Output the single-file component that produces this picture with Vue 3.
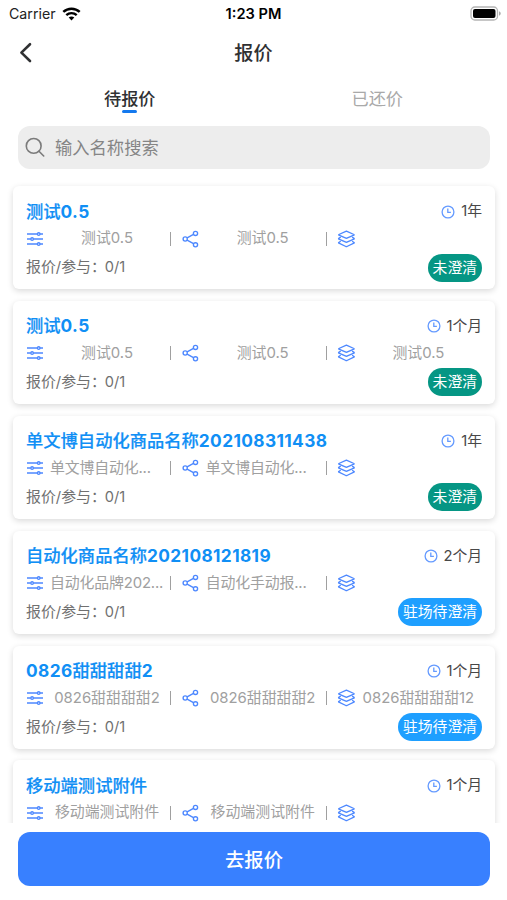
<script setup>
const cards = [
  { title: [['测试', 0], ['0.5', 1]], term: '1年', meta: ['测试0.5', '测试0.5', ''], status: '未澄清', tone: 'green' },
  { title: [['测试', 0], ['0.5', 1]], term: '1个月', meta: ['测试0.5', '测试0.5', '测试0.5'], status: '未澄清', tone: 'green' },
  { title: [['单文博自动化商品名称', 0], ['202108311438', 1]], term: '1年', meta: ['单文博自动化...', '单文博自动化...', ''], status: '未澄清', tone: 'green' },
  { title: [['自动化商品名称', 0], ['202108121819', 1]], term: '2个月', meta: ['自动化品牌202...', '自动化手动报...', ''], status: '驻场待澄清', tone: 'blue' },
  { title: [['0826', 1], ['甜甜甜甜', 0], ['2', 1]], term: '1个月', meta: ['0826甜甜甜甜2', '0826甜甜甜甜2', '0826甜甜甜甜12'], status: '驻场待澄清', tone: 'blue' },
  { title: [['移动端测试附件', 0]], term: '1个月', meta: ['移动端测试附件', '移动端测试附件', ''] },
]
</script>

<template>
  <div class="screen">
    <header class="status-bar">
      <div class="carrier">
        <span>Carrier</span>
        <svg width="19" height="14" viewBox="0 0 19 14" fill="none" stroke="#000">
          <path d="M1.3 4.9C5.9.6 13.1.6 17.7 4.9" stroke-width="2.5" />
          <path d="M4.3 8.1c2.9-2.7 7.5-2.7 10.4 0" stroke-width="2.4" />
          <path d="M6.7 10.5c1.6-1.4 4-1.4 5.6 0L9.5 13.5z" fill="#000" stroke="none" />
        </svg>
      </div>
      <div class="time">1:23 PM</div>
      <div class="battery">
        <svg width="32" height="16" viewBox="0 0 32 16">
          <rect x="1" y="1" width="26.5" height="13" rx="3.8" fill="#fff" stroke="#b4b4b4" stroke-width="1.3" />
          <rect x="3" y="3" width="22.5" height="9" rx="2" fill="#000" />
          <path d="M29 5.3c2.3.8 2.3 3.6 0 4.4z" fill="#aaa" />
        </svg>
      </div>
    </header>

    <nav class="nav-bar">
      <svg class="back" width="16" height="22" viewBox="0 0 16 22" fill="none" stroke="#303133" stroke-width="2.6" stroke-linecap="round" stroke-linejoin="round">
        <path d="M12 2.2 3.4 10.6 12 19" />
      </svg>
      <h1>报价</h1>
    </nav>

    <div class="tabs">
      <div class="tab active"><span>待报价</span><i></i></div>
      <div class="tab"><span>已还价</span></div>
    </div>

    <div class="search">
      <svg width="20" height="20" viewBox="0 0 20 20" fill="none" stroke="#7b7b7b" stroke-width="1.6" stroke-linecap="round">
        <circle cx="8.7" cy="8.9" r="7.4" />
        <path d="m14 14.3 4.7 4.7" />
      </svg>
      <span>输入名称搜索</span>
    </div>

    <main class="list">
      <article v-for="(card, i) in cards" :key="i" class="card">
        <div class="card-head">
          <h2><span v-for="(part, p) in card.title" :key="p" :class="{ digits: part[1] }">{{ part[0] }}</span></h2>
          <div class="term">
            <svg width="14" height="14" viewBox="0 0 14 14" fill="none" stroke="#649aff" stroke-width="1.3">
              <circle cx="7" cy="7" r="5.9" />
              <path d="M6.8 3.4v3.9h3.1" />
            </svg>
            <span>{{ card.term }}</span>
          </div>
        </div>
        <div class="meta">
          <div v-for="(text, n) in card.meta" :key="n" class="cell">
            <svg width="18" height="18" viewBox="0 0 18 18" fill="none" stroke="#4d88ff" stroke-width="1.35" stroke-linejoin="round">
              <template v-if="n === 0">
                <path d="M1 4h10.3M14 4h3M1 9h3.8M7.4 9H17M1 14h10.3M14 14h3" />
                <circle cx="12.7" cy="4" r="1.3" />
                <circle cx="6.1" cy="9" r="1.3" />
                <circle cx="12.7" cy="14" r="1.3" />
              </template>
              <template v-else-if="n === 1">
                <circle cx="3.2" cy="9" r="2.1" />
                <circle cx="13.5" cy="3.4" r="2.1" />
                <circle cx="13.5" cy="14.8" r="2.1" />
                <path d="m5.1 7.9 6.4-3.5M5.1 10.1l6.4 3.6" />
              </template>
              <template v-else>
                <path d="M9.4 1.2 16.9 4.5Q17.3 4.8 16.9 5.1L9.9 8.1Q9.4 8.3 8.9 8.1L1.9 5.1Q1.5 4.8 1.9 4.5z" />
                <path d="M3.7 7.2 1.7 8.4Q1.4 8.8 1.9 9.1L8.9 12.1Q9.4 12.3 9.9 12.1L16.9 9.1Q17.4 8.8 17.1 8.4L15.1 7.2" />
                <path d="M3.7 11.2 1.7 12.5Q1.4 12.9 1.9 13.2L8.9 16.5Q9.4 16.7 9.9 16.5L16.9 13.2Q17.4 12.9 17.1 12.5L15.1 11.2" />
              </template>
            </svg>
            <span class="value" :class="{ clipped: text.endsWith('...') }">{{ text }}</span>
            <span v-if="n < 2" class="divider"></span>
          </div>
        </div>
        <div v-if="card.status" class="card-foot">
          <span class="count">报价/参与：<em>0/1</em></span>
          <span class="badge" :class="card.tone">{{ card.status }}</span>
        </div>
      </article>
    </main>

    <footer class="bottom">
      <button type="button">去报价</button>
    </footer>
  </div>
</template>

<style>
body {
  margin: 0;
  background: #fff;
}
</style>

<style scoped>
.screen {
  width: 507px;
  height: 900px;
  display: flex;
  flex-direction: column;
  overflow: hidden;
  background: #fff;
  color: #303133;
  font-family: Inter, "Noto Sans CJK SC", sans-serif;
}
.status-bar {
  height: 27px;
  display: grid;
  grid-template-columns: 1fr 1fr 1fr;
  align-items: center;
  color: #000;
  font-size: 14.2px;
  flex: none;
}
.carrier {
  display: flex;
  align-items: center;
  gap: 6px;
  padding-left: 9px;
  color: #222;
}
.time {
  text-align: center;
  font-weight: 600;
  font-size: 14.6px;
}
.battery {
  display: flex;
  justify-content: flex-end;
  padding-right: 5px;
}
.nav-bar {
  height: 51px;
  display: grid;
  grid-template-columns: 60px 1fr 60px;
  align-items: center;
  flex: none;
}
.back {
  margin-left: 18px;
}
h1 {
  margin: 0;
  text-align: center;
  font-size: 19.2px;
  font-weight: 500;
  line-height: 28px;
}
.tabs {
  height: 48px;
  display: flex;
  padding: 0 6px;
  flex: none;
}
.tab {
  flex: 1;
  display: flex;
  flex-direction: column;
  align-items: center;
  padding-top: 8px;
  font-size: 17.2px;
  line-height: 25px;
  color: #a9a9a9;
}
.tab.active {
  color: #303133;
  font-weight: 500;
}
.tab i {
  width: 15px;
  height: 3px;
  margin-top: -1px;
  border-radius: 2px;
  background: #1479ee;
}
.search {
  height: 43px;
  margin: 0 17px 0 18px;
  display: flex;
  align-items: center;
  gap: 10px;
  padding: 0 0 1px 7px;
  border-radius: 12px;
  background: #ededed;
  color: #858585;
  font-size: 17.3px;
  box-sizing: border-box;
  flex: none;
}
.search span {
  margin-top: -1px;
}
.list {
  flex: 1;
  min-height: 0;
  display: flex;
  flex-direction: column;
  gap: 11.8px;
  padding: 17.4px 12px 0 13px;
  overflow: hidden;
}
.card {
  height: 103px;
  padding: 12.2px 13px 0;
  border-radius: 6px;
  background: #fff;
  box-shadow: 0 2px 6px rgba(0, 0, 0, 0.15);
  box-sizing: border-box;
  flex: none;
}
.card-head {
  height: 26px;
  display: flex;
  align-items: center;
  justify-content: space-between;
}
h2 {
  margin: 0;
  font-size: 17.3px;
  line-height: 26px;
  font-weight: 500;
  color: #108ff5;
  white-space: nowrap;
  -webkit-text-stroke: 0.2px #108ff5;
}
.digits {
  font-weight: 700;
  letter-spacing: 0.38px;
  -webkit-text-stroke: 0;
}
.term {
  display: flex;
  align-items: center;
  gap: 5px;
  font-size: 14.8px;
  line-height: 22px;
  color: #484848;
}
.term svg {
  margin-right: 0.8px;
}
.term span {
  margin-top: -0.4px;
}
.meta {
  height: 28px;
  display: flex;
}
.cell {
  width: 155.7px;
  display: flex;
  align-items: center;
  flex: none;
}
.cell svg {
  flex: none;
}
.value {
  width: 126px;
  margin-top: -0.4px;
  text-align: center;
  font-size: 14.9px;
  line-height: 22px;
  color: #a0a0a0;
  white-space: nowrap;
}
.value.clipped {
  text-align: left;
  padding-left: 6px;
  box-sizing: border-box;
  letter-spacing: -0.15px;
}
.divider {
  width: 1.4px;
  height: 14px;
  background: #a0a0a0;
}
.cell:last-child {
  width: 144px;
}
.card-foot {
  height: 30px;
  display: flex;
  align-items: center;
  justify-content: space-between;
}
.count {
  margin-top: -0.2px;
  font-size: 14.9px;
  line-height: 22px;
  color: #707070;
}
.count em {
  margin-left: -1px;
  font-style: normal;
  font-size: 14.6px;
}
.badge {
  height: 28px;
  padding: 0 5px;
  border-radius: 14px;
  color: #fff;
  font-size: 14.8px;
  line-height: 28px;
}
.green {
  background: #059684;
}
.blue {
  background: #1e9fff;
}
.bottom {
  height: 77px;
  padding: 9px 17px 0 18px;
  box-sizing: border-box;
  background: #fff;
  flex: none;
}
button {
  width: 100%;
  height: 54px;
  border: 0;
  border-radius: 12px;
  background: #3880ff;
  color: #fff;
  font-family: inherit;
  font-size: 19.3px;
  font-weight: 500;
}
</style>
